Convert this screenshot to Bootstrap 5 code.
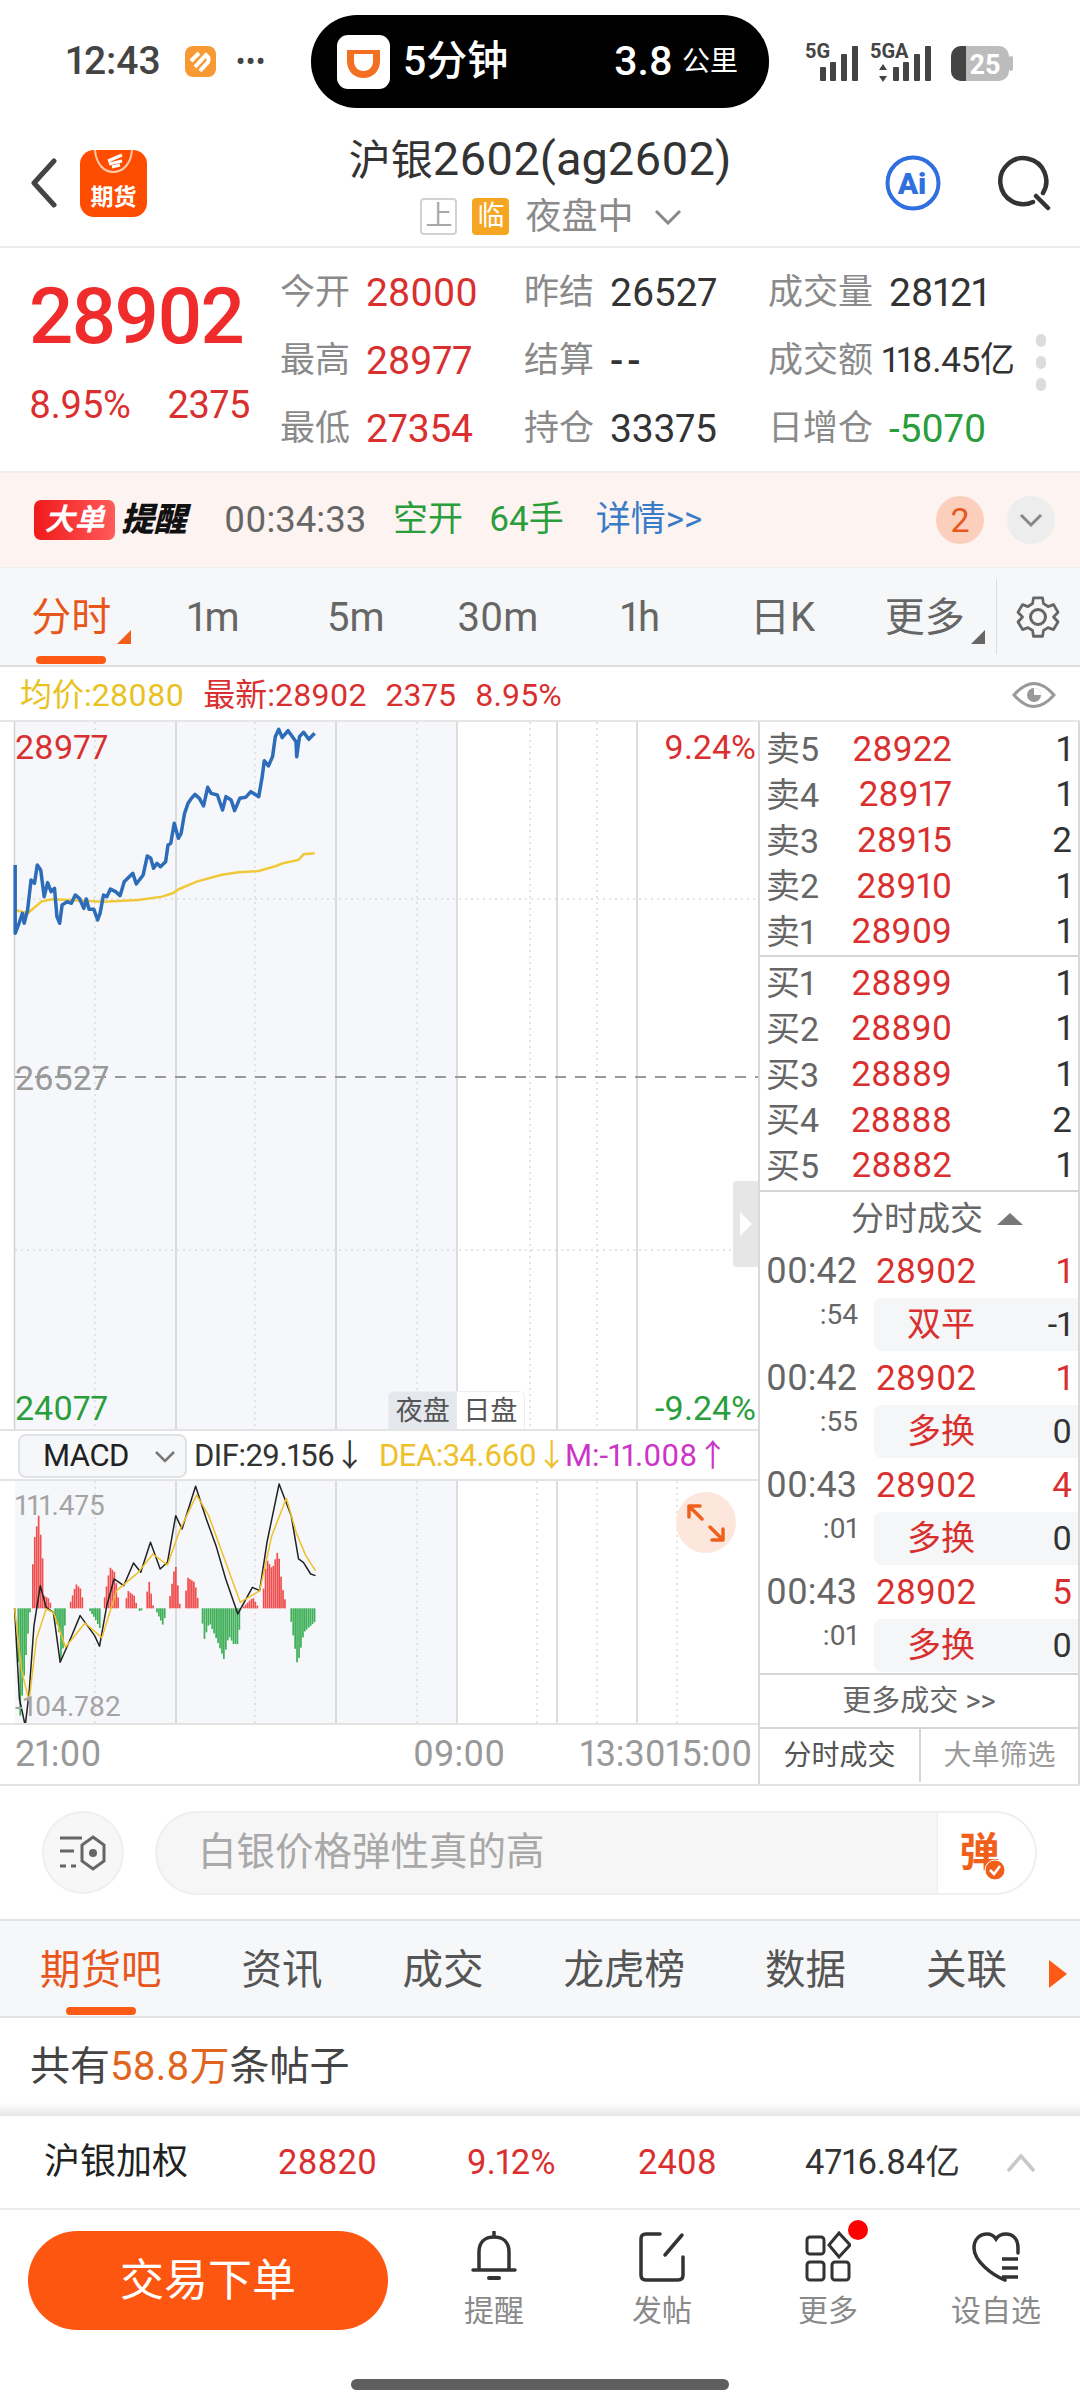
<!DOCTYPE html>
<html lang="zh-CN">
<head>
  <meta charset="UTF-8">
  <meta name="viewport" content="width=device-width, initial-scale=1.0">
  <title>沪银2602</title>
  <link href="https://cdn.jsdelivr.net/npm/bootstrap@5.3.0/dist/css/bootstrap.min.css" rel="stylesheet">
  <style>
    body { width: 1080px; height: 2400px; overflow: hidden; background: #fff; color: #333; font-family: Roboto, "Noto Sans CJK SC", sans-serif; font-size: 34px; line-height: 1.2; font-variant-numeric: proportional-nums; }
    .up { color: #d9302f; }
    .down { color: #2a9d3c; }
    .mute { color: #999; }

    .statusbar { height: 120px; padding: 15px 0 12px 66px; }
    .clock { font-size: 39px; font-weight: 500; color: #444; width: 119px; }
    .dots { font-size: 25px; font-weight: 700; color: #444; margin-left: 20px; width: 75px; letter-spacing: 1px; line-height: 1; }
    .island { width: 458px; height: 93px; background: #000; color: #fff; border-radius: 46px; padding: 0 31px 0 26px; }
    .island-txt { font-size: 41px; font-weight: 500; margin-left: 13px; }
    .island-km { font-size: 41px; font-weight: 500; }
    .island-unit { font-size: 28px; margin-left: 9px; }
    .statusicons { margin-left: auto; margin-right: 63px; }

    .topbar { height: 128px; border-bottom: 2px solid #ececec; }
    .topleft { width: 200px; padding-left: 30px; gap: 23px; }
    .appicon { width: 67px; height: 67px; background: #ff4d00; border-radius: 14px; overflow: hidden; color: #fff; font-size: 23px; font-weight: 700; line-height: 1; padding-bottom: 8px; position: relative; }
    .appicon svg { position: absolute; top: 0; left: 0; }
    .topmid { width: 680px; }
    .ttl { font-size: 47px; color: #333; line-height: 1.2; }
    .ttl span { font-size: 42px; }
    .subinfo { margin: 11px 0 0 22px; }
    .tagbox { width: 37px; height: 37px; font-size: 27px; line-height: 33px; text-align: center; border-radius: 4px; border: 2px solid #d2d2d2; color: #a8a8a8; }
    .tagbox.hot { background: #f5a623; border-color: #f5a623; color: #fff; margin-left: 15px; }
    .mkt { font-size: 36px; color: #8a8a8a; margin: 0 20px 0 16px; line-height: 1; }
    .topright { width: 200px; padding-right: 28px; gap: 57px; }

    .quote { height: 225px; border-bottom: 2px solid #f0ecea; position: relative; }
    .pricebox { width: 280px; padding: 30px 0 0 29px; }
    .bigprice { font-size: 78px; font-weight: 500; color: #f02b2b; letter-spacing: -2.4px; line-height: 1; }
    .pricesub { font-size: 38px; margin-top: 27px; gap: 37px; letter-spacing: -.3px; }
    .statgrid { display: grid; grid-template-columns: 244px 244px 270px; grid-auto-rows: 68px; padding-top: 11px; }
    .statcell { display: flex; align-items: center; font-size: 39px; color: #333; letter-spacing: -.2px; }
    .statcell b { font-weight: 400; font-size: 35px; color: #8a8a8a; margin-right: 16px; letter-spacing: 0; }
    .statcell.tight { font-size: 35px; }
    .statcell.tight b { margin-right: 9px; }
    .nodata { letter-spacing: 4px; font-weight: 500; }
    .moredots { position: absolute; right: 34px; top: 86px; width: 10px; gap: 9px; }
    .moredots i { display: block; height: 13px; background: #dcdcdc; border-radius: 6px; }

    .alertband { height: 95px; background: #fdf3f0; padding: 0 25px 0 34px; border-bottom: 1px solid #eee; }
    .bigtag { width: 81px; height: 40px; border-radius: 7px; background: linear-gradient(90deg, #f01a1a, #ff5a5a); color: #fff; font-size: 30px; font-weight: 700; font-style: italic; line-height: 40px; text-align: center; }
    .bigword { font-size: 33px; font-weight: 900; font-style: italic; color: #111; margin-left: 6px; width: 72px; white-space: nowrap; letter-spacing: -.5px; }
    .alert-time { font-size: 36.5px; color: #666; margin-left: 31px; width: 169px; }
    .alert-green { font-size: 35px; color: #2a9d3c; }
    .detaillink { font-size: 35px; color: #3a7bc8; margin-left: 32px; }
    .circ { width: 48px; height: 48px; border-radius: 50%; font-size: 34px; }
    .circ.badge2 { background: #fccfbd; color: #e8561c; margin-right: 23px; }
    .circ.fold { background: #ededed; }

    .periodbar { height: 99px; background: #f6f7f9; border-bottom: 2px solid #dedede; position: relative; }
    .perioditem { width: 142.3px; text-align: center; font-size: 40px; color: #666; position: relative; padding-top: 2px; }
    .perioditem.on { color: #e8561c; }
    .cornermark { position: absolute; right: 11px; bottom: -2px; width: 0; height: 0; border-left: 14px solid transparent; border-bottom: 14px solid #f0601c; }
    .cornermark.dark { border-bottom-color: #666; }
    .periodline { position: absolute; left: 36px; bottom: 1px; width: 70px; height: 8px; border-radius: 4px; background: #fd5a15; }
    .gearcell { border-left: 1px solid #ddd; height: 75px; width: 84px; }

    .legendrow { height: 55px; padding: 3px 24px 0 20px; border-bottom: 2px solid #e6e6e6; font-size: 32px; gap: 19px; }
    .avg { color: #e8c21f; }

    .chartwrap { height: 1062px; }
    .leftcol { width: 758px; }
    .rightcol { width: 322px; border-left: 2px solid #d9d9d9; border-right: 2px solid #d9d9d9; }
    .mainchart { height: 709px; position: relative; border-bottom: 2px solid #e3e3e3; }
    .mainchart svg, .macdpane svg { display: block; }
    .axlabel { position: absolute; font-size: 34px; line-height: 1; }
    .daynight { position: absolute; left: 388px; bottom: 0; width: 137px; height: 38px; font-size: 27px; line-height: 38px; color: #555; border-radius: 6px 6px 0 0; overflow: hidden; border: 1px solid #eee; border-bottom: 0; }
    .daynight span { width: 50%; text-align: center; background: #fff; }
    .daynight span:first-child { background: #e4e7ec; }
    .slidehandle { position: absolute; right: 0; top: 459px; width: 25px; height: 86px; background: #e6e6e6; border-radius: 3px 0 0 3px; }
    .slidehandle::after { content: ""; position: absolute; left: 7px; top: 31px; border-left: 12px solid #fff; border-top: 12px solid transparent; border-bottom: 12px solid transparent; }

    .macdbar { height: 50px; padding: 2px 0 0 18px; font-size: 31px; border-bottom: 2px solid #e3e3e3; white-space: nowrap; letter-spacing: -.5px; }
    .macdsel { width: 169px; height: 44px; border: 2px solid #dfe2e6; border-radius: 8px; background: #f6f7f9; padding: 0 9px 0 23px; margin-right: 7px; color: #222; }
    .macd-dif { width: 185px; color: #333; }
    .macd-dea { width: 186px; color: #eec12a; }
    .macd-m { color: #cc35c8; letter-spacing: 0; }
    .macdpane { height: 244px; position: relative; border-bottom: 2px solid #e3e3e3; }
    .expandbtn { position: absolute; left: 676px; top: 11px; width: 60px; height: 61px; border-radius: 50%; background: #fde6dc; }
    .macdnum { position: absolute; left: 15px; font-size: 28px; color: #a4a4a4; line-height: 1; }
    .timeaxis { height: 56px; padding: 4px 0 0 15px; font-size: 36px; color: #999; }

    .bookrow { height: 45.6px; padding: 0 6px 0 6px; font-size: 35px; }
    .booklbl { width: 75px; color: #666; font-size: 34px; }
    .bookprice { width: 111px; text-align: right; color: #d9302f; }
    .bookqty { flex: 1; text-align: right; color: #333; }
    .sideblock { height: 233px; padding-top: 4px; }
    .sideblock.first { height: 235px; border-bottom: 2px solid #d5d5d5; padding-top: 5px; }
    .sidehead { height: 55px; border-top: 2px solid #d5d5d5; font-size: 33px; color: #666; gap: 14px; padding-left: 36px; }
    .sideup { border-left: 13px solid transparent; border-right: 13px solid transparent; border-bottom: 12px solid #777; }
    .trade { height: 107px; }
    .traderow { height: 53px; padding: 0 6px; font-size: 35px; }
    .tradetime { width: 110px; color: #666; text-align: left; font-size: 36px; }
    .tradeprice { width: 115px; color: #d9302f; }
    .tradeqty { flex: 1; text-align: right; }
    .tradesec { width: 98px; text-align: right; color: #666; font-size: 28px; margin-right: 16px; height: 48px; flex: none; }
    .tradepill { flex: 1; height: 53px; background: #f5f6f8; border-radius: 8px 0 0 8px; padding: 0 6px 0 33px; font-size: 34px; }
    .tradepill span:first-child { color: #d9302f; width: 68px; white-space: nowrap; }
    .tradepill span:last-child { flex: 1; text-align: right; color: #333; }
    .morelink { height: 56px; border-top: 2px solid #d5d5d5; border-bottom: 2px solid #d5d5d5; font-size: 29px; color: #666; }
    .sidetabs { height: 53px; font-size: 28px; color: #555; line-height: 53px; }
    .sidetabs span { width: 50%; text-align: center; }
    .sidetabs span + span { border-left: 2px solid #d5d5d5; color: #9a9a9a; }

    .inputrow { height: 137px; border-top: 2px solid #e3e3e3; border-bottom: 2px solid #e3e3e3; padding: 0 43px 0 42px; gap: 31px; }
    .toolcirc { width: 82px; height: 83px; border-radius: 50%; background: #f7f7f7; border: 2px solid #efefef; flex: none; }
    .fakeinput { flex: 1; height: 84px; border-radius: 42px; border: 2px solid #efefef; background: #f6f6f6; padding-left: 41px; font-size: 38.5px; color: #a8a8a8; overflow: hidden; }
    .danmu { width: 98px; height: 100%; background: #fff; border-left: 1px solid #eee; color: #f0601c; font-size: 40px; font-weight: 700; position: relative; padding-right: 14px; }
    .danmu svg { position: absolute; left: 46px; top: 46px; }

    .subtabs { height: 97px; background: #f6f7f9; border-bottom: 2px solid #e3e3e3; padding: 3px 0 0 40px; gap: 80px; font-size: 40.5px; color: #555; position: relative; }
    .subtabs .on { color: #e8561c; }
    .subline { position: absolute; left: 66px; bottom: 1px; width: 70px; height: 8px; border-radius: 4px; background: #fd5a15; }
    .subarrow { position: absolute; left: 1049px; top: 39px; border-left: 18px solid #fd5a15; border-top: 14px solid transparent; border-bottom: 14px solid transparent; }

    .postcount { height: 98px; padding-left: 30px; font-size: 40px; color: #444; background: linear-gradient(180deg, #fff 86%, #e6e6e6 100%); }
    .postcount span { color: #e0661f; }

    .indexrow { height: 94px; border-bottom: 2px solid #ececec; font-size: 34.5px; position: relative; padding-top: 2px; }
    .indexname { font-size: 36px; color: #222; margin-left: 44px; width: 234px; }

    .bottombar { height: 191px; position: relative; padding: 21px 0 0 28px; }
    .tradebtn { width: 360px; height: 99px; background: #fd5610; color: #fff; font-size: 44px; border-radius: 50px; border: 0; }
    .tradebtn:hover { background: #fd5610; color: #fff; }
    .dockitem { position: absolute; top: 21px; width: 120px; text-align: center; font-size: 30px; color: #8a8a8a; line-height: 1; }
    .dockitem svg { display: block; margin: 0 auto 13px; }
    .reddot { position: absolute; left: 80px; top: -11px; width: 20px; height: 20px; background: #f00; border-radius: 50%; }
    .homebar { position: absolute; left: 351px; bottom: 11px; width: 378px; height: 11px; border-radius: 6px; background: #5f5f5f; }
  </style>
</head>
<body>
  <div class="statusbar d-flex align-items-center">
    <div class="clock">12:43</div>
    <svg width="31" height="31" viewBox="0 0 31 31"><rect width="31" height="31" rx="8" fill="#f79a34"/><path d="M6 15 L14 7 M10 21 L21 9 Q25 12 23 16 L15 25" fill="none" stroke="#fff" stroke-width="4"/></svg>
    <div class="dots">•••</div>
    <div class="island d-flex align-items-center">
      <svg width="53" height="54" viewBox="0 0 53 54"><rect width="53" height="54" rx="11" fill="#fff"/><path d="M10 15 H43 V26 C43 37 35 43 26.500 43 C18 43 10 37 10 26 Z M17 19 V26 C17 32 21 36 26.500 36 C32 36 36 32 36 26 V19 Z" fill="#f36f21" fill-rule="evenodd"/></svg>
      <span class="island-txt">5分钟</span>
      <span class="island-km ms-auto">3.8</span>
      <span class="island-unit">公里</span>
    </div>
    <svg class="statusicons" width="212" height="72" viewBox="0 0 212 72">
      <g font-family="Roboto, sans-serif" font-weight="700" font-size="20" fill="#444"><text x="0" y="32">5G</text><text x="65" y="32">5GA</text></g>
      <g fill="#444">
        <rect x="15" y="41" width="6" height="14" rx="1"/><rect x="25" y="36" width="6" height="19" rx="1"/><rect x="36" y="28" width="6" height="27" rx="1"/><rect x="47" y="20" width="6" height="35" rx="1"/>
        <path d="M78 38 l4 6 h-8 z M78 56 l4 -6 h-8 z"/>
        <rect x="88" y="41" width="6" height="14" rx="1"/><rect x="98" y="36" width="6" height="19" rx="1"/><rect x="109" y="28" width="6" height="27" rx="1"/><rect x="120" y="20" width="6" height="35" rx="1"/>
      </g>
      <rect x="146" y="20" width="58" height="35" rx="10" fill="#bcbcbc"/>
      <path d="M156 20 h5 v35 h-5 a10 10 0 0 1 -10 -10 v-15 a10 10 0 0 1 10 -10 z" fill="#444"/>
      <rect x="204" y="30" width="4" height="15" rx="2" fill="#bcbcbc"/>
      <text x="180" y="48" font-family="Roboto, sans-serif" font-weight="700" font-size="27" fill="#fff" text-anchor="middle">25</text>
    </svg>
  </div>

  <div class="topbar d-flex align-items-center">
    <div class="topleft d-flex align-items-center">
      <svg width="27" height="50" viewBox="0 0 27 50"><path d="M24 3 L4 25 L24 47" fill="none" stroke="#444" stroke-width="5" stroke-linecap="round" stroke-linejoin="round"/></svg>
      <div class="appicon d-flex align-items-end justify-content-center">
        <svg width="67" height="30" viewBox="0 0 67 30"><path d="M15 0 C16 14 24 22 33 22 C43 22 51 14 52 0" fill="none" stroke="#ffc9ae" stroke-width="2"/><path d="M28 11 L42 5 M29 14 L42 11 M32 17 L40 15" stroke="#fff" stroke-width="3"/></svg>
        <span>期货</span>
      </div>
    </div>
    <div class="topmid d-flex flex-column align-items-center">
      <div class="ttl"><span>沪银</span>2602(ag2602)</div>
      <div class="subinfo d-flex align-items-center">
        <span class="tagbox">上</span>
        <span class="tagbox hot">临</span>
        <span class="mkt">夜盘中</span>
        <svg width="28" height="16" viewBox="0 0 28 16"><path d="M2 2 L14 14 L26 2" fill="none" stroke="#888" stroke-width="3"/></svg>
      </div>
    </div>
    <div class="topright d-flex align-items-center justify-content-end">
      <svg width="56" height="56" viewBox="0 0 56 56"><circle cx="28" cy="28" r="25.500" fill="none" stroke="#2f6fe0" stroke-width="4"/><text x="27" y="39" font-family="Roboto, sans-serif" font-weight="900" font-size="30" fill="#2f6fe0" text-anchor="middle">Ai</text></svg>
      <svg width="54" height="56" viewBox="0 0 54 56"><path d="M35 47 A23 23 0 1 1 45 38" fill="none" stroke="#333" stroke-width="4.500" stroke-linecap="round"/><path d="M38 41 L50 53" stroke="#333" stroke-width="4.500" stroke-linecap="round"/></svg>
    </div>
  </div>

  <div class="quote d-flex">
    <div class="pricebox">
      <div class="bigprice">28902</div>
      <div class="pricesub d-flex up"><span>8.95%</span><span>2375</span></div>
    </div>
    <div class="statgrid">
      <div class="statcell"><b>今开</b><span class="up">28000</span></div>
      <div class="statcell"><b>昨结</b><span>26527</span></div>
      <div class="statcell"><b>成交量</b><span>28121</span></div>
      <div class="statcell"><b>最高</b><span class="up">28977</span></div>
      <div class="statcell"><b>结算</b><span class="nodata">--</span></div>
      <div class="statcell tight"><b>成交额</b><span>118.45亿</span></div>
      <div class="statcell"><b>最低</b><span class="up">27354</span></div>
      <div class="statcell"><b>持仓</b><span>33375</span></div>
      <div class="statcell"><b>日增仓</b><span class="down">-5070</span></div>
    </div>
    <div class="moredots d-flex flex-column"><i></i><i></i><i></i></div>
  </div>

  <div class="alertband d-flex align-items-center">
    <div class="bigtag">大单</div>
    <div class="bigword">提醒</div>
    <div class="alert-time">00:34:33</div>
    <div class="alert-green" style="width: 96px">空开</div>
    <div class="alert-green">64手</div>
    <div class="detaillink">详情&gt;&gt;</div>
    <div class="circ badge2 d-flex align-items-center justify-content-center ms-auto">2</div>
    <div class="circ fold d-flex align-items-center justify-content-center">
      <svg width="24" height="15" viewBox="0 0 24 15"><path d="M2 2 L12 12 L22 2" fill="none" stroke="#888" stroke-width="3"/></svg>
    </div>
  </div>

  <div class="periodbar d-flex align-items-center">
    <div class="perioditem on">分时<i class="cornermark"></i></div>
    <div class="perioditem">1m</div>
    <div class="perioditem">5m</div>
    <div class="perioditem">30m</div>
    <div class="perioditem">1h</div>
    <div class="perioditem">日K</div>
    <div class="perioditem">更多<i class="cornermark dark"></i></div>
    <div class="gearcell d-flex align-items-center justify-content-center">
      <svg width="44" height="46" viewBox="0 0 44 46"><path d="M17 3 H27 L28 9 L33 12 L39 10 L44 18 L39 23 L44 28 L39 36 L33 34 L28 37 L27 43 H17 L16 37 L11 34 L5 36 L0 28 L5 23 L0 18 L5 10 L11 12 L16 9 Z" transform="translate(2 1) scale(.91 .96)" fill="none" stroke="#666" stroke-width="3" stroke-linejoin="round"/><circle cx="22" cy="23" r="7.500" fill="none" stroke="#666" stroke-width="3"/></svg>
    </div>
    <div class="periodline"></div>
  </div>

  <div class="legendrow d-flex align-items-center">
    <span class="avg">均价:28080</span>
    <span class="up">最新:28902</span>
    <span class="up">2375</span>
    <span class="up">8.95%</span>
    <svg class="ms-auto" width="44" height="30" viewBox="0 0 44 30"><path d="M2 15 Q22 -8 42 15 Q22 38 2 15 Z" fill="none" stroke="#999" stroke-width="3"/><circle cx="22" cy="15" r="7" fill="#999"/><path d="M22 8 A7 7 0 0 1 29 15 L22 15 Z" fill="#fff"/></svg>
  </div>

  <div class="chartwrap d-flex">
    <div class="leftcol">
      <div class="mainchart">
        <svg id="mainSvg" width="758" height="707" viewBox="0 722 758 707">
          <rect x="15" y="722" width="442" height="707" fill="#f5f7fa"/>
          <g stroke="#dcdcdc" stroke-width="1.500" stroke-dasharray="2 4">
            <path d="M95 722 V1429 M255 722 V1429 M417 722 V1429 M530 722 V1429 M597 722 V1429 M15 899 H758 M15 1250 H758"/>
          </g>
          <g stroke="#d2d2d2" stroke-width="1.500"><path d="M14.500 722 V1429 M176 722 V1429 M336 722 V1429 M457 722 V1429 M557 722 V1429 M637 722 V1429"/></g>
          <path d="M15 1077 H758" stroke="#999" stroke-width="2" stroke-dasharray="11 9"/>
          <g transform="translate(0 700) scale(.345 .3333)">
            <polyline vector-effect="non-scaling-stroke" fill="none" stroke="#f0c93a" stroke-width="2.500" points="44,630 80,640 120,605 150,598 200,600 300,605 400,600 470,590 500,580 520,567 570,545 640,525 690,517 750,513 800,498 820,490 865,480 880,463 912,460"/>
            <polyline vector-effect="non-scaling-stroke" fill="none" stroke="#2d6cb8" stroke-width="3.500" stroke-linejoin="round" points="44,495 44,700 55,670 65,640 70,670 80,630 90,540 100,550 108,495 118,510 128,590 138,548 148,575 158,565 165,650 173,670 180,615 195,605 207,610 218,585 230,595 243,625 250,597 258,628 272,628 283,660 290,640 300,585 310,590 320,567 335,575 348,587 360,545 385,520 395,552 415,525 427,468 437,475 445,505 455,490 465,500 480,485 487,435 495,430 505,370 517,415 525,400 535,340 545,310 555,295 565,283 578,295 590,318 602,262 612,280 630,285 645,330 655,290 670,300 680,332 695,295 712,292 727,275 750,290 760,230 766,182 778,198 790,170 798,110 808,88 818,113 835,92 858,125 860,170 868,110 880,97 895,118 912,100"/>
          </g>
        </svg>
        <span class="axlabel up" style="left: 15px; top: 8px">28977</span>
        <span class="axlabel mute" style="left: 15px; top: 339px">26527</span>
        <span class="axlabel down" style="left: 15px; top: 669px">24077</span>
        <span class="axlabel up" style="right: 2px; top: 8px">9.24%</span>
        <span class="axlabel down" style="right: 2px; top: 669px">-9.24%</span>
        <div class="daynight d-flex"><span>夜盘</span><span>日盘</span></div>
        <div class="slidehandle"></div>
      </div>
      <div class="macdbar d-flex align-items-center">
        <div class="macdsel d-flex align-items-center justify-content-between">
          <span>MACD</span>
          <svg width="22" height="13" viewBox="0 0 22 13"><path d="M2 2 L11 11 L20 2" fill="none" stroke="#777" stroke-width="2.500"/></svg>
        </div>
        <span class="macd-dif">DIF:29.156↓</span>
        <span class="macd-dea">DEA:34.660↓</span>
        <span class="macd-m">M:-11.008↑</span>
      </div>
      <div class="macdpane">
        <svg width="758" height="242" viewBox="0 1482 758 242">
          <rect x="15" y="1482" width="442" height="242" fill="#f5f7fa"/>
          <g stroke="#dcdcdc" stroke-width="1.500" stroke-dasharray="2 4"><path d="M95 1482 V1724 M255 1482 V1724 M417 1482 V1724 M537 1482 V1724 M597 1482 V1724 M677 1482 V1724"/></g>
          <g stroke="#d2d2d2" stroke-width="1.500"><path d="M176 1482 V1724 M336 1482 V1724 M457 1482 V1724 M557 1482 V1724 M637 1482 V1724"/></g>
          <g id="macdBars"></g>
          <g transform="translate(0 1400) scale(.4854 .3333)" fill="none">
            <polyline vector-effect="non-scaling-stroke" stroke="#222" stroke-width="1.500" stroke-linejoin="round" points="30,628 40,900 52,980 60,880 70,680 83,560 95,625 110,640 124,790 145,720 165,650 180,680 195,710 205,742 220,620 235,540 255,560 275,492 290,520 310,430 330,510 345,490 362,350 375,390 403,262 425,360 445,440 465,540 490,645 520,565 535,575 550,430 575,255 600,350 615,480 625,490 640,525 650,530"/>
            <polyline vector-effect="non-scaling-stroke" stroke="#eec12a" stroke-width="1.500" stroke-linejoin="round" points="30,628 45,820 60,905 75,720 95,630 110,640 135,745 175,672 210,716 240,575 285,520 315,465 345,498 370,395 405,288 430,350 460,470 495,610 535,575 560,410 590,298 610,400 630,470 650,515"/>
          </g>
        </svg>
        <span class="macdnum" style="top: 11px">111.475</span>
        <span class="macdnum" style="top: 212px">-104.782</span>
        <div class="expandbtn d-flex align-items-center justify-content-center">
          <svg width="40" height="40" viewBox="0 0 40 40"><path d="M3 3 L16 16 M3 3 H14 M3 3 V14 M37 37 L24 24 M37 37 H26 M37 37 V26" fill="none" stroke="#f0601c" stroke-width="3.500" stroke-linecap="round"/></svg>
        </div>
      </div>
      <div class="timeaxis d-flex align-items-center">
        <span style="width: 398px">21:00</span>
        <span style="width: 167px">09:00</span>
        <span>13:30</span>
        <span>15:00</span>
      </div>
    </div>

    <div class="rightcol">
      <div class="sideblock first" id="askBook"></div>
      <div class="sideblock" id="bidBook"></div>
      <div class="sidehead d-flex align-items-center justify-content-center"><span>分时成交</span><i class="sideup"></i></div>
      <div id="trades"></div>
      <div class="morelink d-flex align-items-center justify-content-center">更多成交 &gt;&gt;</div>
      <div class="sidetabs d-flex"><span>分时成交</span><span>大单筛选</span></div>
    </div>
  </div>

  <div class="inputrow d-flex align-items-center">
    <div class="toolcirc d-flex align-items-center justify-content-center">
      <svg width="46" height="40" viewBox="0 0 46 40"><path d="M0 5 H22 M0 18 H14 M0 33 H6 M11 33 H16" stroke="#666" stroke-width="3"/><path d="M33 4 L44 12 V28 L33 36 L22 28 V12 Z" fill="none" stroke="#666" stroke-width="3"/><circle cx="33" cy="20" r="4" fill="#666"/></svg>
    </div>
    <div class="fakeinput d-flex align-items-center justify-content-between">
      <span>白银价格弹性真的高</span>
      <div class="danmu d-flex align-items-center justify-content-center">弹
        <svg width="22" height="22" viewBox="0 0 22 22"><circle cx="11" cy="11" r="10" fill="#f0601c" stroke="#fff" stroke-width="1"/><path d="M6 11 L10 15 L16 7" fill="none" stroke="#fff" stroke-width="2.500"/></svg>
      </div>
    </div>
  </div>

  <div class="subtabs d-flex align-items-center">
    <span class="on">期货吧</span><span>资讯</span><span>成交</span><span>龙虎榜</span><span>数据</span><span>关联</span>
    <i class="subline"></i><i class="subarrow"></i>
  </div>

  <div class="postcount d-flex align-items-center">共有<span>58.8万</span>条帖子</div>

  <div class="indexrow d-flex align-items-center">
    <span class="indexname">沪银加权</span>
    <span class="up" style="width: 189px">28820</span>
    <span class="up" style="width: 171px">9.12%</span>
    <span class="up" style="width: 167px">2408</span>
    <span>4716.84亿</span>
    <svg style="margin-left: 46px" width="30" height="20" viewBox="0 0 30 20"><path d="M2 18 L15 3 L28 18" fill="none" stroke="#c8c8c8" stroke-width="3.500"/></svg>
  </div>

  <div class="bottombar">
    <button class="btn tradebtn d-flex align-items-center justify-content-center" type="button">交易下单</button>
    <div class="dockitem" style="left: 434px">
      <svg width="46" height="52" viewBox="0 0 46 52"><path d="M8 38 V21 C8 11 14 6 23 6 C32 6 38 11 38 21 V38 M2 39 H44 M23 1 V6" fill="none" stroke="#333" stroke-width="3.500" stroke-linecap="round"/><path d="M18 47 H28" stroke="#333" stroke-width="4" stroke-linecap="round"/></svg>
      提醒
    </div>
    <div class="dockitem" style="left: 602px">
      <svg width="48" height="52" viewBox="0 0 48 52"><path d="M22 3 H8 Q3 3 3 8 V44 Q3 49 8 49 H40 Q45 49 45 44 V26 M44 4 L27 24" fill="none" stroke="#333" stroke-width="3.500" stroke-linecap="round"/></svg>
      发帖
    </div>
    <div class="dockitem" style="left: 768px">
      <svg width="46" height="52" viewBox="0 0 46 52"><rect x="2" y="6" width="17" height="17" rx="3" fill="none" stroke="#333" stroke-width="3"/><rect x="2" y="31" width="17" height="18" rx="3" fill="none" stroke="#333" stroke-width="3"/><rect x="27" y="31" width="17" height="18" rx="3" fill="none" stroke="#333" stroke-width="3"/><path d="M34 2 L45 14 L34 26 L24 14 Z" fill="none" stroke="#333" stroke-width="3"/></svg>
      更多
      <i class="reddot"></i>
    </div>
    <div class="dockitem" style="left: 936px">
      <svg width="48" height="52" viewBox="0 0 48 52"><path d="M33 49 C20 44 2 30 2 17 C2 8 8 3 15 3 C19 3 22 5 24 8 C26 5 30 3 34 3 C41 3 46 8 46 17 V22" fill="none" stroke="#333" stroke-width="3.500" stroke-linecap="round"/><path d="M30 28 H46 M30 37 H46 M30 46 H46" stroke="#333" stroke-width="3.500"/></svg>
      设自选
    </div>
    <div class="homebar"></div>
  </div>

  <script>
    const asks = [['卖5', 28922, 1], ['卖4', 28917, 1], ['卖3', 28915, 2], ['卖2', 28910, 1], ['卖1', 28909, 1]];
    const bids = [['买1', 28899, 1], ['买2', 28890, 1], ['买3', 28889, 1], ['买4', 28888, 2], ['买5', 28882, 1]];
    const trades = [
      ['00:42', ':54', 1, '双平', '-1'],
      ['00:42', ':55', 1, '多换', '0'],
      ['00:43', ':01', 4, '多换', '0'],
      ['00:43', ':01', 5, '多换', '0']
    ];

    function renderBook(id, rows) {
      document.getElementById(id).innerHTML = rows.map(r => `
        <div class="bookrow d-flex align-items-center">
          <span class="booklbl">${r[0]}</span>
          <span class="bookprice">${r[1]}</span>
          <span class="bookqty">${r[2]}</span>
        </div>`).join('');
    }
    renderBook('askBook', asks);
    renderBook('bidBook', bids);

    document.getElementById('trades').innerHTML = trades.map(t => `
      <div class="trade">
        <div class="traderow d-flex align-items-center">
          <span class="tradetime">${t[0]}</span>
          <span class="tradeprice">28902</span>
          <span class="tradeqty up">${t[2]}</span>
        </div>
        <div class="d-flex align-items-start">
          <span class="tradesec">${t[1]}</span>
          <div class="tradepill d-flex align-items-center"><span>${t[3]}</span><span>${t[4]}</span></div>
        </div>
      </div>`).join('');

    // histogram outlines, read off the chart: [x, y] in zoomed coords, zero line at y=628
    const red = [
      [[62,628],[68,430],[78,350],[85,450],[90,590],[100,600],[105,628]],
      [[140,628],[155,555],[165,570],[172,628]],
      [[210,628],[225,505],[235,520],[245,628]],
      [[255,628],[262,575],[275,590],[282,628]],
      [[298,628],[305,540],[315,628]],
      [[345,628],[360,490],[370,628]],
      [[378,628],[385,535],[400,550],[410,628]],
      [[497,628],[520,595],[532,628]],
      [[538,628],[548,480],[560,510],[572,452],[580,560],[590,628]]
    ];
    const green = [
      [[32,628],[40,950],[50,800],[60,640]],
      [[108,628],[120,700],[125,800],[135,628]],
      [[180,628],[195,660],[205,690],[208,628]],
      [[282,628],[288,640],[292,628]],
      [[318,628],[335,680],[342,628]],
      [[412,628],[420,720],[430,670],[445,720],[460,780],[470,710],[480,735],[490,735],[495,628]],
      [[595,628],[612,800],[625,700],[650,665],[650,628]]
    ];

    function drawBars(outlines, color) {
      let out = '';
      outlines.forEach(pts => {
        for (let x = pts[0][0]; x <= pts[pts.length - 1][0]; x += 4) {
          let i = 0;
          while (i < pts.length - 2 && pts[i + 1][0] < x) i++;
          const a = pts[i], b = pts[i + 1];
          const y = a[1] + (b[1] - a[1]) * (x - a[0]) / Math.max(b[0] - a[0], 1);
          const px = x / 2.0625, top = 1400 + Math.min(y, 628) / 3, bottom = 1400 + Math.max(y, 628) / 3;
          out += `<rect x="${px.toFixed(1)}" y="${top.toFixed(1)}" width="1.700" height="${(bottom - top).toFixed(1)}" fill="${color}"/>`;
        }
      });
      return out;
    }
    document.getElementById('macdBars').innerHTML = drawBars(red, '#f04f4f') + drawBars(green, '#3fb058');
  </script>
  <script src="https://cdn.jsdelivr.net/npm/bootstrap@5.3.0/dist/js/bootstrap.bundle.min.js"></script>
</body>
</html>
